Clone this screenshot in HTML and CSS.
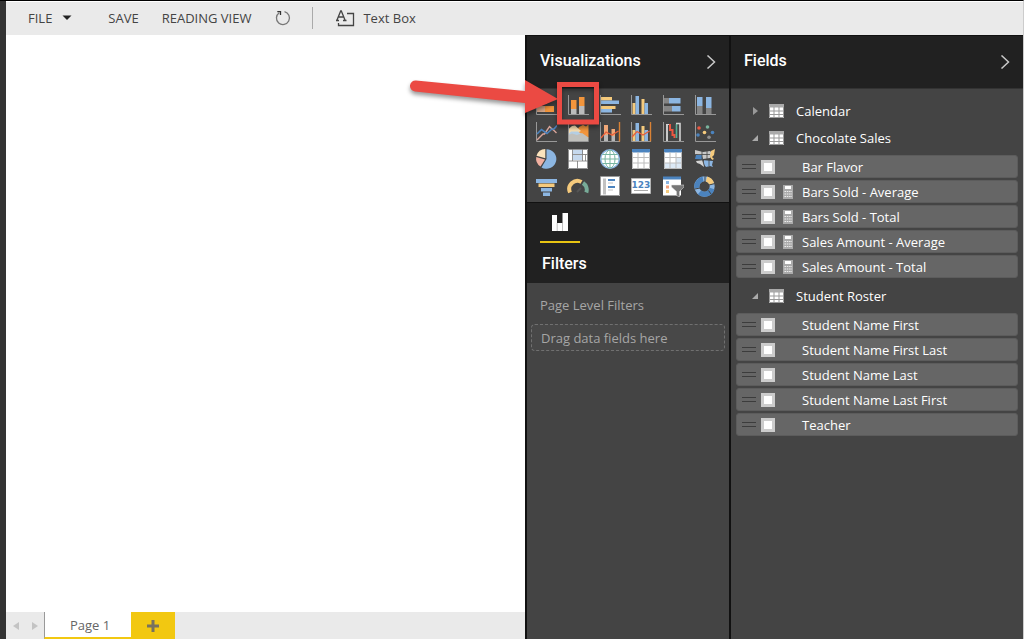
FILE: index.html
```html
<!DOCTYPE html>
<html lang="en">
<head>
<meta charset="utf-8">
<title>Report editor</title>
<link rel="stylesheet" href="styles.css">
</head>
<body>
<div class="app">
  <header class="toolbar">
    <button class="tool file">FILE <svg width="10" height="6" viewBox="0 0 10 6"><path d="M0.500 0.500H9.500L5 5Z" fill="#222"/></svg></button>
    <button class="tool save">SAVE</button>
    <button class="tool reading">READING VIEW</button>
    <button class="tool refresh" aria-label="Refresh"><svg width="16" height="16" viewBox="0 0 16 16" fill="none" stroke="#777" stroke-width="1.3"><path d="M9.500 1.700A6.500 6.500 0 1 1 4.200 2.700"/><path d="M2.300 1.700H5.500V5" stroke="#333"/></svg></button>
    <span class="divider"></span>
    <button class="tool textbox"><svg width="19" height="18" viewBox="0 0 19 18" fill="none" stroke="#444" stroke-width="1.3"><path d="M1 11L4.700 2H5.300L9 11M2.600 8H7.500M0 11.500H3M7 11.500H10.500M11 4.500H17.500V16.500H2.500V14"/></svg>Text Box</button>
  </header>
  <div class="workspace">
    <main class="report">
      <div class="canvas"></div>
      <nav class="pages">
        <button class="step" aria-label="Previous page"><svg width="6" height="8" viewBox="0 0 6 8"><path d="M6 0V8L0 4Z" fill="#c3c3c3"/></svg></button>
        <button class="step" aria-label="Next page"><svg width="6" height="8" viewBox="0 0 6 8"><path d="M0 0V8L6 4Z" fill="#c3c3c3"/></svg></button>
        <button class="page">Page 1</button>
        <button class="add" aria-label="Add page"><svg width="14" height="14" viewBox="0 0 14 14"><path d="M5.500 1H8.500V5.500H13V8.500H8.500V13H5.500V8.500H1V5.500H5.500Z" fill="#77725f"/></svg></button>
      </nav>
    </main>
    <section class="panel viz">
      <div class="head"><h2>Visualizations</h2><button class="collapse" aria-label="Collapse visualizations"><svg width="10" height="14" viewBox="0 0 10 14"><path d="M1.500 0.500L8.500 7L1.500 13.500" fill="none" stroke="#c8c8c8" stroke-width="1.500"/></svg></button></div>
      <div class="gallery">
        <button aria-label="Stacked bar chart"><svg viewBox="0 0 22 22"><path class="axis" d="M1.500 1V20.500H22"/><path fill="#d9a889" d="M2 12H10V18H2ZM2 4H8V10H2Z"/><path fill="#f2953c" d="M10 12H19V18H10ZM8 4H12V10H8Z"/></svg></button>
        <button aria-label="Stacked column chart"><svg viewBox="0 0 22 22"><path class="axis" d="M1.500 1V20.500H22"/><path fill="#f2953c" d="M4 6H9.500V15H4ZM12 3H17.500V12H12Z"/><path fill="#bcbcbc" d="M4 15H9.500V20H4ZM12 12H17.500V20H12Z"/></svg></button>
        <button aria-label="Clustered bar chart"><svg viewBox="0 0 22 22"><path class="axis" d="M1.500 1V20.500H22"/><path fill="#f5ca7c" d="M2 3H13V6.500H2ZM2 12H16.500V15H2Z"/><path fill="#8cb6e2" d="M2 6.500H20V10H2ZM2 15H13V18.500H2Z"/></svg></button>
        <button aria-label="Clustered column chart"><svg viewBox="0 0 22 22"><path class="axis" d="M1.500 1V20.500H22"/><path fill="#f5ca7c" d="M2.500 9H5.500V20H2.500ZM11.500 5H14.500V20H11.500Z"/><path fill="#8cb6e2" d="M5.500 2H9V20H5.500ZM14.500 9H18V20H14.500Z"/></svg></button>
        <button aria-label="100% stacked bar chart"><svg viewBox="0 0 22 22"><path class="axis" d="M1.500 1V20.500H22"/><path fill="#858585" d="M2 4H7V9.500H2ZM2 12H10V17.500H2Z"/><path fill="#8cb6e2" d="M7 4H18.500V9.500H7ZM10 12H18.500V17.500H10Z"/></svg></button>
        <button aria-label="100% stacked column chart"><svg viewBox="0 0 22 22"><path class="axis" d="M1.500 1V20.500H22"/><path fill="#8cb6e2" d="M3 3H8.500V12H3ZM12 3H17.500V14H12Z"/><path fill="#858585" d="M3 12H8.500V20H3ZM12 14H17.500V20H12Z"/></svg></button>

        <button aria-label="Line chart"><svg viewBox="0 0 22 22" fill="none"><path class="axis" d="M1.500 1V20.500H22"/><path stroke="#d8a49a" stroke-width="1.400" d="M2 19L8 13H9.500L14.500 5.500L17 8L19 9.500L21.500 12"/><path stroke="#4b83be" stroke-width="1.600" d="M2 13L6.500 8.500L12 12.500L17 8L19 8L22 4.500"/></svg></button>
        <button aria-label="Area chart"><svg viewBox="0 0 22 22"><path fill="#f2953c" d="M8 13L12 6L16 4L19 5.500L21.500 3.500V17L14 13Z"/><path fill="#fae0b2" d="M1.500 8L5 5L8 4.500L14 10L7 13H1.500Z"/><path fill="#b5cfe4" d="M1.500 13L4 10.500L11 10.500L16 14L9 16L1.500 17Z"/><path fill="#c0c0bc" d="M1.500 14L5 12.500L10 14L15 12L21.500 16.500V20.500H1.500Z"/><path class="axis" d="M1.500 1V20.500H21.500"/></svg></button>
        <button aria-label="Line and stacked column chart"><svg viewBox="0 0 22 22" fill="none"><path class="axis" d="M1.500 1V20.500H21"/><path fill="#f0a878" d="M5 4H9V14H5ZM12.500 8H16V15H12.500Z"/><path fill="#b7b7b7" d="M5 14H9V20H5ZM12.500 15H16V20H12.500Z"/><path stroke="#e8603c" stroke-width="1.300" d="M2 17L7 11L13 14L19.500 10"/><path stroke="#d98235" stroke-width="1.400" d="M20.500 1V20.500"/></svg></button>
        <button aria-label="Line and clustered column chart"><svg viewBox="0 0 22 22" fill="none"><path class="axis" d="M1.500 1V20.500H21"/><path fill="#f5ca7c" d="M2.500 9H5.500V20H2.500ZM11.500 5H14.500V20H11.500Z"/><path fill="#8cb6e2" d="M5.500 2H9V20H5.500ZM14.500 9H18V20H14.500Z"/><path stroke="#e8603c" stroke-width="1.300" d="M2 16L7 10.500L13 14L19.500 10"/><path stroke="#d98235" stroke-width="1.400" d="M20.500 1V20.500"/></svg></button>
        <button aria-label="Waterfall chart"><svg viewBox="0 0 22 22" fill="none"><path class="axis" d="M1.500 1V20.500H22"/><path stroke="#c9c9c9" stroke-width="2" d="M5 4V20"/><path stroke="#d2d2d2" d="M4 3.500H8"/><path stroke="#ec5740" stroke-width="2" d="M8 3V9H10.500V14H12.500V17"/><path stroke="#55ac93" stroke-width="1.600" d="M14.500 17V3"/><path stroke="#d2d2d2" stroke-width="1.600" d="M18 20V2.500H14"/></svg></button>
        <button aria-label="Scatter chart"><svg viewBox="0 0 22 22"><path class="axis" d="M1.500 1V20.500H22"/><circle cx="5" cy="7" r="1.800" fill="#ec5740"/><circle cx="13.500" cy="6" r="1.800" fill="#7ab39d"/><circle cx="4" cy="14" r="1.800" fill="#4b83be"/><circle cx="10.500" cy="11.500" r="1.800" fill="#f5ca7c"/><circle cx="18.500" cy="11.500" r="1.800" fill="#4b83be"/><circle cx="15" cy="16.300" r="1.800" fill="#909090"/></svg></button>

        <button aria-label="Pie chart"><svg viewBox="0 0 22 22"><path fill="#8cb6e2" d="M11.500 11V1.200A9.800 9.800 0 1 1 6.500 19.400Z"/><path fill="#fae3bd" d="M10.300 10.300L1.500 7.800A9.500 9.500 0 0 1 10.300 1Z"/><path fill="#f0afa0" d="M10 11.500L5.500 18.500A9.500 9.500 0 0 1 1.200 9Z"/></svg></button>
        <button aria-label="Treemap"><svg viewBox="0 0 22 22"><path fill="#fff" d="M1 1H21V21H1Z"/><path fill="#c6d9ee" d="M6 2H16V6H6ZM6 7H15V12H6Z"/><path stroke="#777" stroke-width="0.800" fill="none" d="M1.500 1.500H20.500V20.500H1.500ZM5.500 1V13M1 13H21M15.500 1V13M5.500 6.500H15.500M15.500 6.500H20.500M10.500 13V20.500M18.500 6.500V13"/></svg></button>
        <button aria-label="Map"><svg viewBox="0 0 22 22"><circle cx="11" cy="11" r="9.300" fill="#fff" stroke="#8cb6e2" stroke-width="1.500"/><g fill="none" stroke="#78b5a0"><path d="M2 11H20M3.500 6.500H18.500M3.500 15.500H18.500M11 2V20"/><ellipse cx="11" cy="11" rx="5" ry="9"/></g></svg></button>
        <button aria-label="Table"><svg viewBox="0 0 22 22"><path fill="#fff" d="M2 1H20V21H2Z"/><path fill="#4b83be" d="M2 1H20V4.500H2Z"/><path stroke="#bcbcbc" fill="none" d="M2.500 4V20.500H19.500V4M8 4V21M14 4V21M2 9.500H20M2 15H20"/></svg></button>
        <button aria-label="Matrix"><svg viewBox="0 0 22 22"><path fill="#fff" d="M2 1H20V21H2Z"/><path fill="#dce9f6" d="M14 9.500H20V21H2V15H14Z"/><path fill="#4b83be" d="M2 1H20V4.500H2Z"/><path stroke="#bcbcbc" fill="none" d="M2.500 4V20.500H19.500V4M8 4V21M14 4V21M2 9.500H20M2 15H20"/></svg></button>
        <button aria-label="Filled map"><svg viewBox="0 0 22 22"><path fill="#c7c7c7" d="M1 2L9 4L16 3L18 5L16 10L9 11L8 8L1 6Z"/><path fill="#4b83be" d="M2 7L8 7V10L9 12L1 11Z"/><path fill="#f5ca7c" d="M17 3L21 1L20 7L18 9L20 11L18 12L16 9Z"/><path fill="#d4d4d4" d="M2 13L9 12L10 19L6 16L3 15Z"/><path fill="#8cb6e2" d="M10 12L19 13L18 17L19 19L16 18L12 19L10 17Z"/><path fill="none" stroke="#444" stroke-width="0.800" d="M8 3V11L11 19M2 6.500H16M13 3V12M1 11.800H18M15 12V18"/></svg></button>

        <button aria-label="Funnel"><svg viewBox="0 0 22 22"><path fill="#8cb6e2" d="M1 4H22V8H1ZM6 13H17V16.500H6Z"/><path fill="#f5ca7c" d="M3.500 8.500H19.500V12H3.500Z"/><path fill="#8cb6e2" d="M8 17.500H15V21H8Z"/></svg></button>
        <button aria-label="Gauge"><svg viewBox="0 0 22 22" fill="none" stroke-width="4"><path stroke="#f5ca7c" d="M3 17.500A8.200 8.200 0 0 1 14.500 7"/><path stroke="#78ab98" d="M16 8A8.200 8.200 0 0 1 19.300 17.500"/><path stroke="#555" stroke-width="2" d="M10 17L14 13"/></svg></button>
        <button aria-label="Multi-row card"><svg viewBox="0 0 22 22"><path fill="#fff" d="M2 1.500H21V21H2Z"/><path fill="#c2c2c2" d="M4 3.500H7V19.500H4Z"/><path stroke="#4b83be" stroke-width="1.800" d="M9 5H16M9 12H16"/><path stroke="#c2c2c2" d="M9 8H14M9 15H14"/><path stroke="#999" fill="none" d="M1.500 1.500H20.500V20.500H1.500Z"/></svg></button>
        <button aria-label="Card"><svg viewBox="0 0 22 22"><path fill="#fff" stroke="#b5b5b5" d="M1.500 3.500H20.500V18.500H1.500Z"/><text class="digits" x="11" y="13" text-anchor="middle">123</text><path stroke="#aaa" d="M4 15.500H18"/></svg></button>
        <button aria-label="Slicer"><svg viewBox="0 0 22 22"><path fill="#fff" d="M1 2H19V20.500H1Z"/><path fill="#4b83be" d="M1 1.500H19V4.500H1Z"/><path fill="#8cb6e2" d="M4 6H7V9H4Z"/><path fill="#f2a17c" d="M4 10.500H7V13.500H4Z"/><path fill="#f5ca7c" d="M4 15H7V18H4Z"/><path fill="#777" stroke="#ddd" stroke-width="0.500" d="M9.500 10H22V12L17.500 16.500V22L14.500 20.500V16.500L9.500 12Z"/></svg></button>
        <button aria-label="Donut chart"><svg viewBox="0 0 22 22" fill="none" stroke-width="5"><circle cx="10.500" cy="11.500" r="7.700" stroke="#8cb6e2"/><path stroke="#4b83be" d="M9 4A7.700 7.700 0 0 0 3 13M5.500 17.300A7.700 7.700 0 0 0 13 18.800M18 13.500A7.700 7.700 0 0 1 13 18.800"/><path stroke="#f5ca7c" d="M12.500 4A7.700 7.700 0 0 1 17.800 9"/><path stroke="#444" stroke-width="1" d="M11 1V7M1 14L6 13M14.500 15.500L17 19M15 10L21 8.500"/></svg></button>
      </div>
      <div class="wells">
        <button class="tab" aria-label="Fields tab"><svg width="18" height="20" viewBox="0 0 18 20"><path fill="#fff" d="M1 3H6V11H11.500V1H17V19H1Z"/><path stroke="#999" stroke-width="0.600" d="M6.200 11V19M11.500 11V19"/></svg></button>
        <h2>Filters</h2>
      </div>
      <div class="filters">
        <h3>Page Level Filters</h3>
        <div class="drop">Drag data fields here</div>
      </div>
      <svg class="callout" width="192" height="54" viewBox="0 0 192 54">
        <path fill="#eb4a43" d="M9 3.500L118 14V3L151 22L118 36V26L8 14.500A5.500 5.500 0 0 1 9 3.500Z"/>
        <path fill="none" stroke="#eb4a43" stroke-width="5" d="M152.500 7.500H189.500V45H152.500Z"/>
      </svg>
    </section>
    <section class="panel fields">
      <div class="head"><h2>Fields</h2><button class="collapse" aria-label="Collapse fields"><svg width="10" height="14" viewBox="0 0 10 14"><path d="M1.500 0.500L8.500 7L1.500 13.500" fill="none" stroke="#c8c8c8" stroke-width="1.500"/></svg></button></div>
      <div class="tree">
        <button class="table"><svg class="twist" viewBox="0 0 8 10"><path fill="#999" d="M2 1V9L7 5Z"/></svg><svg class="grid" viewBox="0 0 15 14"><path fill="#fff" d="M0 0H15V14H0Z"/><path fill="#aaa" d="M0 0H15V3.500H0Z"/><path stroke="#999" fill="none" d="M0 7H15M0 10.500H15M5 3V14M10 3V14M0.500 3V13.500H14.500V3"/></svg>Calendar</button>
        <button class="table"><svg class="twist" viewBox="0 0 8 10"><path fill="#aaa" d="M7 2V8H1Z"/></svg><svg class="grid" viewBox="0 0 15 14"><path fill="#fff" d="M0 0H15V14H0Z"/><path fill="#aaa" d="M0 0H15V3.500H0Z"/><path stroke="#999" fill="none" d="M0 7H15M0 10.500H15M5 3V14M10 3V14M0.500 3V13.500H14.500V3"/></svg>Chocolate Sales</button>
        <div class="rows">
          <label class="row"><i class="grip"></i><input type="checkbox"><span class="kind"></span>Bar Flavor</label>
          <label class="row"><i class="grip"></i><input type="checkbox"><span class="kind"><svg viewBox="0 0 10 14"><path fill="#aaa" d="M0 0H10V14H0Z"/><path fill="#fff" d="M2 1H8V4H2Z"/><path stroke="#eee" stroke-dasharray="1.500 0.800" d="M1.500 6.500H9M1.500 9H9M1.500 11.500H9"/></svg></span>Bars Sold - Average</label>
          <label class="row"><i class="grip"></i><input type="checkbox"><span class="kind"><svg viewBox="0 0 10 14"><path fill="#aaa" d="M0 0H10V14H0Z"/><path fill="#fff" d="M2 1H8V4H2Z"/><path stroke="#eee" stroke-dasharray="1.500 0.800" d="M1.500 6.500H9M1.500 9H9M1.500 11.500H9"/></svg></span>Bars Sold - Total</label>
          <label class="row"><i class="grip"></i><input type="checkbox"><span class="kind"><svg viewBox="0 0 10 14"><path fill="#aaa" d="M0 0H10V14H0Z"/><path fill="#fff" d="M2 1H8V4H2Z"/><path stroke="#eee" stroke-dasharray="1.500 0.800" d="M1.500 6.500H9M1.500 9H9M1.500 11.500H9"/></svg></span>Sales Amount - Average</label>
          <label class="row"><i class="grip"></i><input type="checkbox"><span class="kind"><svg viewBox="0 0 10 14"><path fill="#aaa" d="M0 0H10V14H0Z"/><path fill="#fff" d="M2 1H8V4H2Z"/><path stroke="#eee" stroke-dasharray="1.500 0.800" d="M1.500 6.500H9M1.500 9H9M1.500 11.500H9"/></svg></span>Sales Amount - Total</label>
        </div>
        <button class="table"><svg class="twist" viewBox="0 0 8 10"><path fill="#aaa" d="M7 2V8H1Z"/></svg><svg class="grid" viewBox="0 0 15 14"><path fill="#fff" d="M0 0H15V14H0Z"/><path fill="#aaa" d="M0 0H15V3.500H0Z"/><path stroke="#999" fill="none" d="M0 7H15M0 10.500H15M5 3V14M10 3V14M0.500 3V13.500H14.500V3"/></svg>Student Roster</button>
        <div class="rows">
          <label class="row"><i class="grip"></i><input type="checkbox"><span class="kind"></span>Student Name First</label>
          <label class="row"><i class="grip"></i><input type="checkbox"><span class="kind"></span>Student Name First Last</label>
          <label class="row"><i class="grip"></i><input type="checkbox"><span class="kind"></span>Student Name Last</label>
          <label class="row"><i class="grip"></i><input type="checkbox"><span class="kind"></span>Student Name Last First</label>
          <label class="row"><i class="grip"></i><input type="checkbox"><span class="kind"></span>Teacher</label>
        </div>
      </div>
    </section>
  </div>
</div>
</body>
</html>
```
FILE: styles.css
```css
* { box-sizing: border-box; }
body { margin: 0; font: 13px/18px "Open Sans", "Noto Sans", sans-serif; background: #333; }
button { border: 0; padding: 0; background: none; font: inherit; color: inherit; }
svg { display: block; flex: none; }
h2, h3 { margin: 0; }
.app { min-height: 100vh; display: flex; flex-direction: column; border-top: 1px solid #000; border-right: 1px solid #ccc; padding-left: 6px; }

.toolbar { height: 34px; flex: none; display: flex; align-items: center; background: #eaeaea; border-top: 1px solid #fff; padding-bottom: 2px; color: #444; white-space: nowrap; }
.tool { display: flex; align-items: center; }
.file { margin-left: 22px; gap: 10px; }
.save { margin-left: 36px; }
.reading { margin-left: 23px; }
.refresh { margin-left: 24px; }
.divider { width: 1px; height: 22px; margin: 0 23px 0 21px; background: #aaa; }
.textbox { gap: 8px; }

.workspace { flex: 1; display: flex; }
.report { flex: 1; min-width: 0; display: flex; flex-direction: column; background: #fff; }
.canvas { flex: 1; }
.pages { height: 27px; display: flex; align-items: stretch; background: #eaeaea; color: #666; }
.step { width: 19px; display: flex; align-items: center; justify-content: center; }
.page { width: 87px; border-left: 1px solid #999; border-bottom: 2px solid #f2c811; background: #fff; padding-left: 4px; }
.add { width: 44px; display: flex; align-items: center; justify-content: center; background: #f2c811; }

.panel { position: relative; background: #444; border-left: 2px solid #111; color: #fff; }
.viz { width: 204px; flex: none; }
.fields { width: 294px; flex: none; }
.head { height: 54px; display: flex; align-items: center; justify-content: space-between; background: #212121; border-top: 1px solid #111; border-bottom: 1px solid #333; padding: 0 13px 2px 13px; }
h2 { font: 500 16px/20px Roboto, sans-serif; }
.collapse { padding-top: 2px; }
.gallery { display: grid; grid-template-columns: repeat(6, 22px); justify-content: space-between; row-gap: 5px; padding: 5px 13px 5px 8px; }
.gallery svg { width: 22px; height: 22px; }
.axis { stroke: #999; stroke-width: 1; fill: none; }
.digits { font: bold 9px "DejaVu Sans", sans-serif; fill: #4b83be; }

.wells { height: 81px; background: #212121; border-top: 1px solid #111; padding: 0 14px; }
.tab { width: 40px; height: 40px; margin-left: -1px; padding: 9px 11px; border-bottom: 2px solid #e8c412; display: block; }
.wells h2 { margin: 11px 1px; }
.filters { padding: 13px 4px; color: #a6a6a6; }
.filters h3 { font: inherit; padding: 0 9px; }
.drop { margin-top: 10px; height: 27px; padding: 4px 9px; border: 1px dashed #707070; border-radius: 4px; background: #484848; }
.callout { position: absolute; left: -120px; top: 42px; filter: drop-shadow(0 3px 2px rgba(0, 0, 0, 0.4)); pointer-events: none; }

.tree { padding: 8px 5px; }
.table { height: 27px; width: 100%; display: flex; align-items: center; padding-left: 15px; }
.twist { width: 8px; height: 10px; }
.grid { width: 15px; height: 14px; margin: 0 12px 0 10px; }
.rows { display: grid; gap: 2px; padding: 4px 0; }
.row { height: 23px; display: flex; align-items: center; border-radius: 3px; background: #666; border: 1px solid #5c5c5c; padding-left: 5px; }
.grip { width: 14px; height: 5px; border: solid #3c3c3c; border-width: 1px 0; margin-right: 5px; }
.row input { appearance: none; width: 14px; height: 14px; margin: 0; border: 3px solid #ccc; background: #fff; }
.kind { width: 10px; margin: 0 9px 0 8px; }
.kind svg { width: 10px; height: 14px; }
```
